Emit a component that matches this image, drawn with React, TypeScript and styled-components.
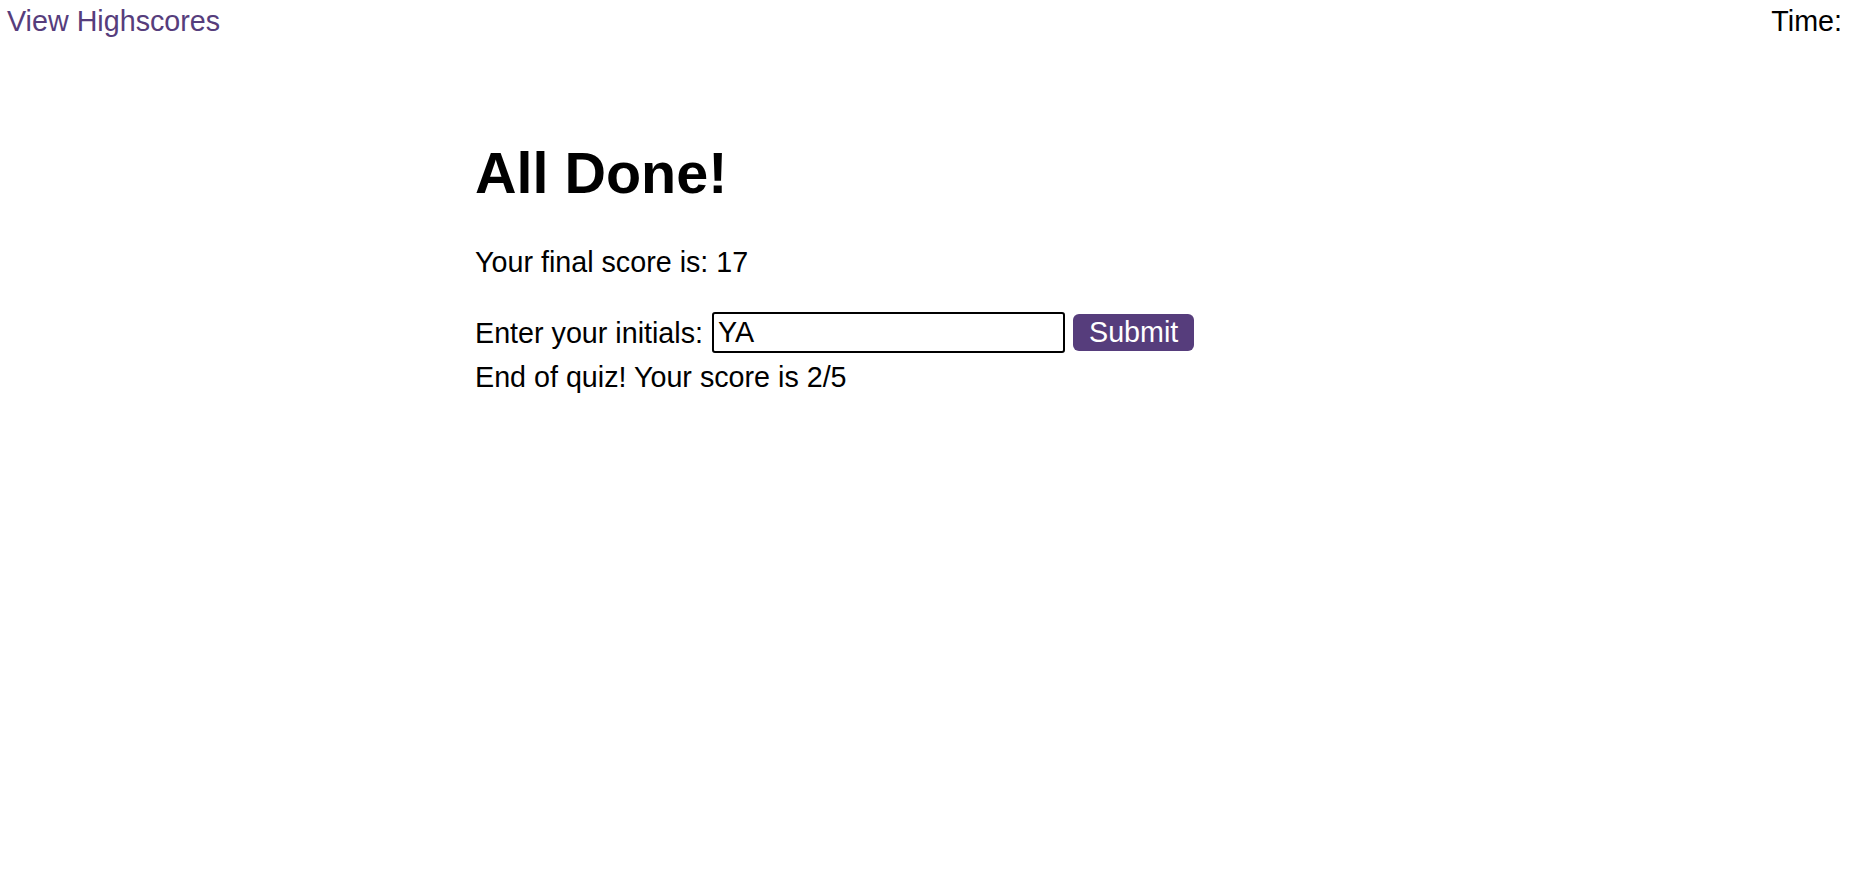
import type { FC } from 'react'
import styled, { createGlobalStyle } from 'styled-components'

const GlobalStyle = createGlobalStyle`
  html, body {
    margin: 0;
    padding: 0;
    background: #ffffff;
    font-family: "Liberation Sans", Arial, sans-serif;
    color: #000000;
  }
`

export const Header = styled.header`
  display: flex;
  flex-direction: row;
  justify-content: space-between;
  align-items: center;
  padding: 5px 8px 0 7px;
  font-size: 28.7px;
  line-height: 32px;
`

export const HighscoresLink = styled.a`
  color: #563d7c;
  text-decoration: none;
  cursor: pointer;
`

export const Timer = styled.span`
  color: #000000;
`

export const Main = styled.main`
  width: 900px;
  margin: 0 auto;
  padding-top: 104px;
  display: flex;
  flex-direction: column;
`

export const Title = styled.h1`
  margin: 0;
  font-size: 57.5px;
  line-height: 65px;
  font-weight: 700;
`

export const Score = styled.p`
  margin: 40px 0 0;
  font-size: 28.7px;
  line-height: 32px;
`

export const Form = styled.form`
  display: flex;
  flex-direction: row;
  align-items: center;
  margin-top: 34px;
  font-size: 28.7px;
`

export const Label = styled.label`
  margin-right: 9px;
  line-height: 32px;
`

export const Input = styled.input`
  box-sizing: border-box;
  width: 353px;
  height: 41px;
  padding: 0 4px;
  border: 2px solid #000000;
  border-radius: 3px;
  font-family: "Liberation Sans", Arial, sans-serif;
  font-size: 28.7px;
  color: #000000;
  outline: none;
`

export const SubmitButton = styled.button`
  box-sizing: border-box;
  height: 37px;
  margin-left: 8px;
  padding: 0 16px;
  border: none;
  border-radius: 6px;
  background: #563d7c;
  color: #ffffff;
  font-family: "Liberation Sans", Arial, sans-serif;
  font-size: 28.7px;
  line-height: 37px;
  cursor: pointer;
`

export const Result = styled.div`
  margin-top: 8px;
  font-size: 28.7px;
  line-height: 32px;
`

const App: FC = () => {
  return (
    <>
      <GlobalStyle />
      <Header>
        <HighscoresLink>View Highscores</HighscoresLink>
        <Timer>Time:</Timer>
      </Header>
      <Main>
        <Title>All Done!</Title>
        <Score>Your final score is: 17</Score>
        <Form onSubmit={(e) => e.preventDefault()}>
          <Label htmlFor="initials">Enter your initials:</Label>
          <Input id="initials" type="text" defaultValue="YA" />
          <SubmitButton type="submit">Submit</SubmitButton>
        </Form>
        <Result>End of quiz! Your score is 2/5</Result>
      </Main>
    </>
  )
}

export default App
